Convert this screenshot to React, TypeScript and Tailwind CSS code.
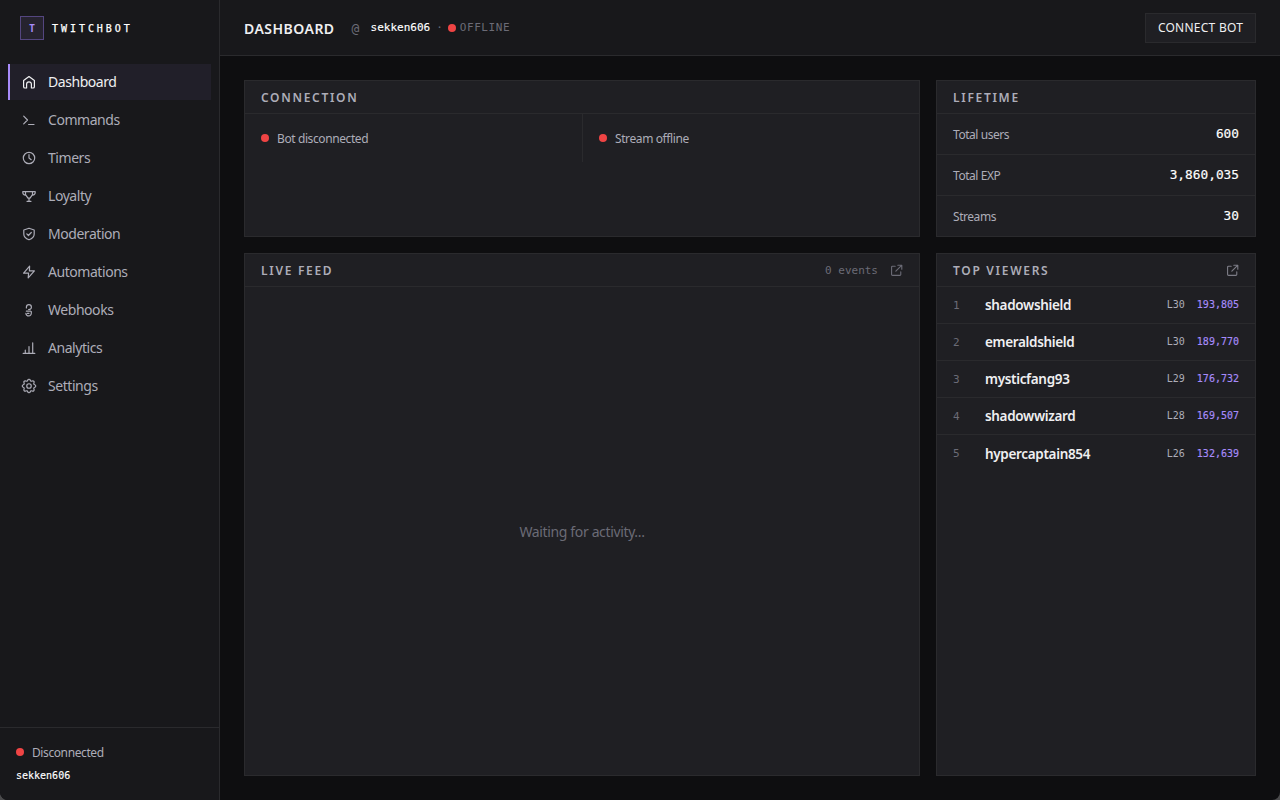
import React from "react";
import { TbSettings } from "react-icons/tb";

const icons: Record<string, React.ReactNode> = {
  home: <path d="M4.6 13H2.9A1.3 1.3 0 0 1 1.6 11.700V5.600L7 1.500 12.400 5.600v6.100a1.300 1.300 0 0 1-1.300 1.300H9.400V9.200a2.400 2.400 0 0 0-4.800 0z" />,
  terminal: <path d="M1.700 3.200 5.500 7 1.700 10.800M6.600 11.500h5.400" />,
  clock: <path d="M7 1.300a5.700 5.700 0 1 0 0 11.400 5.700 5.700 0 0 0 0-11.400zM7 3.700V7l2.200 1.700" />,
  trophy: <path d="M.8 2.600h12.400v1c0 1.600-1.200 2.500-2.700 2.500M.8 2.600v1c0 1.600 1.200 2.500 2.700 2.500M3.500 2.600v3L6 9.200h2l2.500-3.600v-3M7 9.200v3M5 12.300h4" />,
  shield: <path d="M7 1.200 12.200 3V7c0 3-2.300 4.800-5.200 5.800C4.100 11.800 1.800 10 1.800 7V3zM4.800 6.900l1.600 1.600L9.300 5.500" />,
  zap: <path d="M7.600 1.200 1.600 8.200H6.600L6.200 12.800 12.400 5.900H7.400z" />,
  hook: <path d="M4.400 4.900v-.7a2.500 2.500 0 0 1 5 0c0 1.500-1.300 2.300-2.800 2.300M4.400 8.200h4.200M7 10.300h-1.600M9.300 8.500v1.600a2.700 2.700 0 1 1-5.400.3" />,
  chart: <path d="M1.200 12.400h11.600M3.300 12V9.200M7 12V5.600M10.700 12V1.800" />,
  external: <path d="M5.600 2.400H2.700a1 1 0 0 0-1 1v7.900a1 1 0 0 0 1 1h7.900a1 1 0 0 0 1-1V8.400M8.400 1.300h4.300v4.300M12.500 1.500 6.300 7.700" />,
};

const Icon: React.FC<{ name: string; size?: number }> = ({ name, size = 14 }) => (
  <svg
    width={size}
    height={size}
    viewBox="0 0 14 14"
    fill="none"
    stroke="currentColor"
    strokeWidth="1.2"
    strokeLinecap="round"
    strokeLinejoin="round"
  >
    {icons[name]}
  </svg>
);

const nav = [
  ["Dashboard", "home"],
  ["Commands", "terminal"],
  ["Timers", "clock"],
  ["Loyalty", "trophy"],
  ["Moderation", "shield"],
  ["Automations", "zap"],
  ["Webhooks", "hook"],
  ["Analytics", "chart"],
  ["Settings", "gear"],
];

const totals = [
  ["Total users", "600"],
  ["Total EXP", "3,860,035"],
  ["Streams", "30"],
];

const viewers = [
  ["shadowshield", "L30", "193,805"],
  ["emeraldshield", "L30", "189,770"],
  ["mysticfang93", "L29", "176,732"],
  ["shadowwizard", "L28", "169,507"],
  ["hypercaptain854", "L26", "132,639"],
];

const mono = "font-['DejaVu_Sans_Mono',monospace]";

const Dot: React.FC = () => (
  <span className="w-2 h-2 rounded-full bg-[#ef4444] shrink-0" />
);

const Panel: React.FC<{
  title: string;
  extra?: React.ReactNode;
  children?: React.ReactNode;
}> = ({ title, extra, children }) => (
  <section className="bg-[#1f1f23] border border-[#2a2a2d] flex flex-col min-h-0">
    <div className="h-[33px] shrink-0 border-b border-[#2a2a2d] px-4 flex items-center justify-between">
      <h2 className="pt-0.5 text-[12px] font-semibold tracking-[1.7px] text-[#adadb8]">
        {title}
      </h2>
      {extra}
    </div>
    {children}
  </section>
);

const App: React.FC = () => {
  return (
    <div className="h-screen w-full bg-[#4a4a4c]">
      <div className="h-full flex rounded-b-lg overflow-hidden bg-[#0e0e10] text-[#efeff1] font-['Noto_Sans',sans-serif]">
        {/* Sidebar */}
        <aside className="w-[220px] shrink-0 bg-[#18181b] border-r border-[#2a2a2d] flex flex-col">
          <div className="h-14 px-5 flex items-center gap-2">
            <div
              className={`w-6 h-6 border border-[#544680] bg-[#26232f] text-[#a78bfa] text-[10px] font-bold flex items-center justify-center ${mono}`}
            >
              T
            </div>
            <span
              className={`pt-px text-[10px] [-webkit-text-stroke:0.25px] text-white tracking-[2.95px] ${mono}`}
            >
              TWITCHBOT
            </span>
          </div>
          <nav className="p-2 flex flex-col gap-[2px]">
            {nav.map(([label, icon], i) => (
              <div
                key={label}
                className={`h-9 border-l-2 px-3 flex items-center gap-3 text-[14px] tracking-[-0.45px] ${
                  i === 0
                    ? "border-[#a78bfa] bg-[#211f29]"
                    : "border-transparent text-[#adadb8]"
                }`}
              >
                {icon === "gear" ? (
                  <TbSettings size={18} strokeWidth={1.6} className="-mx-0.5" />
                ) : (
                  <Icon name={icon} />
                )}
                <span className="pb-0.5">{label}</span>
              </div>
            ))}
          </nav>
          <div className="mt-auto h-[73px] border-t border-[#2a2a2d] px-4 pt-[15px]">
            <div className="h-[18px] flex items-center gap-2 text-[12px] tracking-[-0.4px] text-[#adadb8]">
              <Dot />
              <span className="pt-px">Disconnected</span>
            </div>
            <div
              className={`mt-[7px] text-[10px] text-white [-webkit-text-stroke:0.15px] ${mono}`}
            >
              sekken606
            </div>
          </div>
        </aside>

        <main className="flex-1 flex flex-col min-w-0">
          {/* Top bar */}
          <header className="h-14 shrink-0 bg-[#18181b] border-b border-[#2a2a2d] px-6 flex items-center">
            <h1 className="pt-px text-[14px] font-semibold tracking-[0.48px] mr-[17px]">
              DASHBOARD
            </h1>
            <div className={`text-[11px] text-[#6b6b76] flex items-center ${mono}`}>
              <span className="w-[19px] pt-0.5 text-[13px]">@</span>
              <span className="pt-0.5 text-white [-webkit-text-stroke:0.15px]">
                sekken606
              </span>
              <span className="pt-0.5 ml-[6px] mr-[5px]">·</span>
              <Dot />
              <span className="pt-0.5 ml-1 text-[11px] tracking-[0.55px]">OFFLINE</span>
            </div>
            <button className="ml-auto h-[30px] w-[111px] whitespace-nowrap flex items-center justify-center border border-[#2a2a2d] bg-[#1f1f23] text-[12px] tracking-[0.25px]">
              <span className="pt-px">CONNECT BOT</span>
            </button>
          </header>

          <div className="flex-1 p-6 grid grid-cols-[1fr_320px] grid-rows-[157px_1fr] gap-4">
            <Panel title="CONNECTION">
              <div className="flex text-[12px] tracking-[-0.4px] text-[#adadb8]">
                <div className="w-[338px] h-12 px-4 flex items-center gap-2 border-r border-[#2a2a2d]">
                  <Dot />
                  <span className="pt-0.5">Bot disconnected</span>
                </div>
                <div className="h-12 px-4 flex items-center gap-2">
                  <Dot />
                  <span className="pt-0.5">Stream offline</span>
                </div>
              </div>
            </Panel>

            <Panel title="LIFETIME">
              {totals.map(([label, value]) => (
                <div
                  key={label}
                  className="h-[41px] shrink-0 last:h-10 last:border-0 border-b border-[#2a2a2d] px-4 flex items-center justify-between text-[12px] tracking-[-0.45px] text-[#adadb8]"
                >
                  <span className="pt-0.5">{label}</span>
                  <span
                    className={`text-[12.8px] tracking-normal text-white [-webkit-text-stroke:0.15px] ${mono}`}
                  >
                    {value}
                  </span>
                </div>
              ))}
            </Panel>

            <Panel
              title="LIVE FEED"
              extra={
                <div className="flex items-center gap-3 text-[#6b6b76]">
                  <span className={`pt-0.5 text-[11px] ${mono}`}>0 events</span>
                  <Icon name="external" size={13} />
                </div>
              }
            >
              <div className="flex-1 flex items-center justify-center text-[14px] tracking-[-0.36px] text-[#6b6b76]">
                Waiting for activity...
              </div>
            </Panel>

            <Panel
              title="TOP VIEWERS"
              extra={
                <span className="text-[#7c7c86]">
                  <Icon name="external" size={13} />
                </span>
              }
            >
              {viewers.map(([name, level, exp], i) => (
                <div
                  key={name}
                  className="h-[37px] shrink-0 border-b last:border-0 border-[#2a2a2d] px-4 flex items-center"
                >
                  <span className={`w-8 pt-0.5 text-[11px] text-[#6b6b76] ${mono}`}>
                    {i + 1}
                  </span>
                  <span className="flex-1 pt-px text-[13.5px] tracking-[-0.33px] font-semibold">
                    {name}
                  </span>
                  <span className={`mr-3 pb-px text-[10px] text-[#adadb8] ${mono}`}>
                    {level}
                  </span>
                  <span
                    className={`pb-px text-[10px] text-[#a78bfa] [-webkit-text-stroke:0.15px] ${mono}`}
                  >
                    {exp}
                  </span>
                </div>
              ))}
            </Panel>
          </div>
        </main>
      </div>
    </div>
  );
};

export default App;
